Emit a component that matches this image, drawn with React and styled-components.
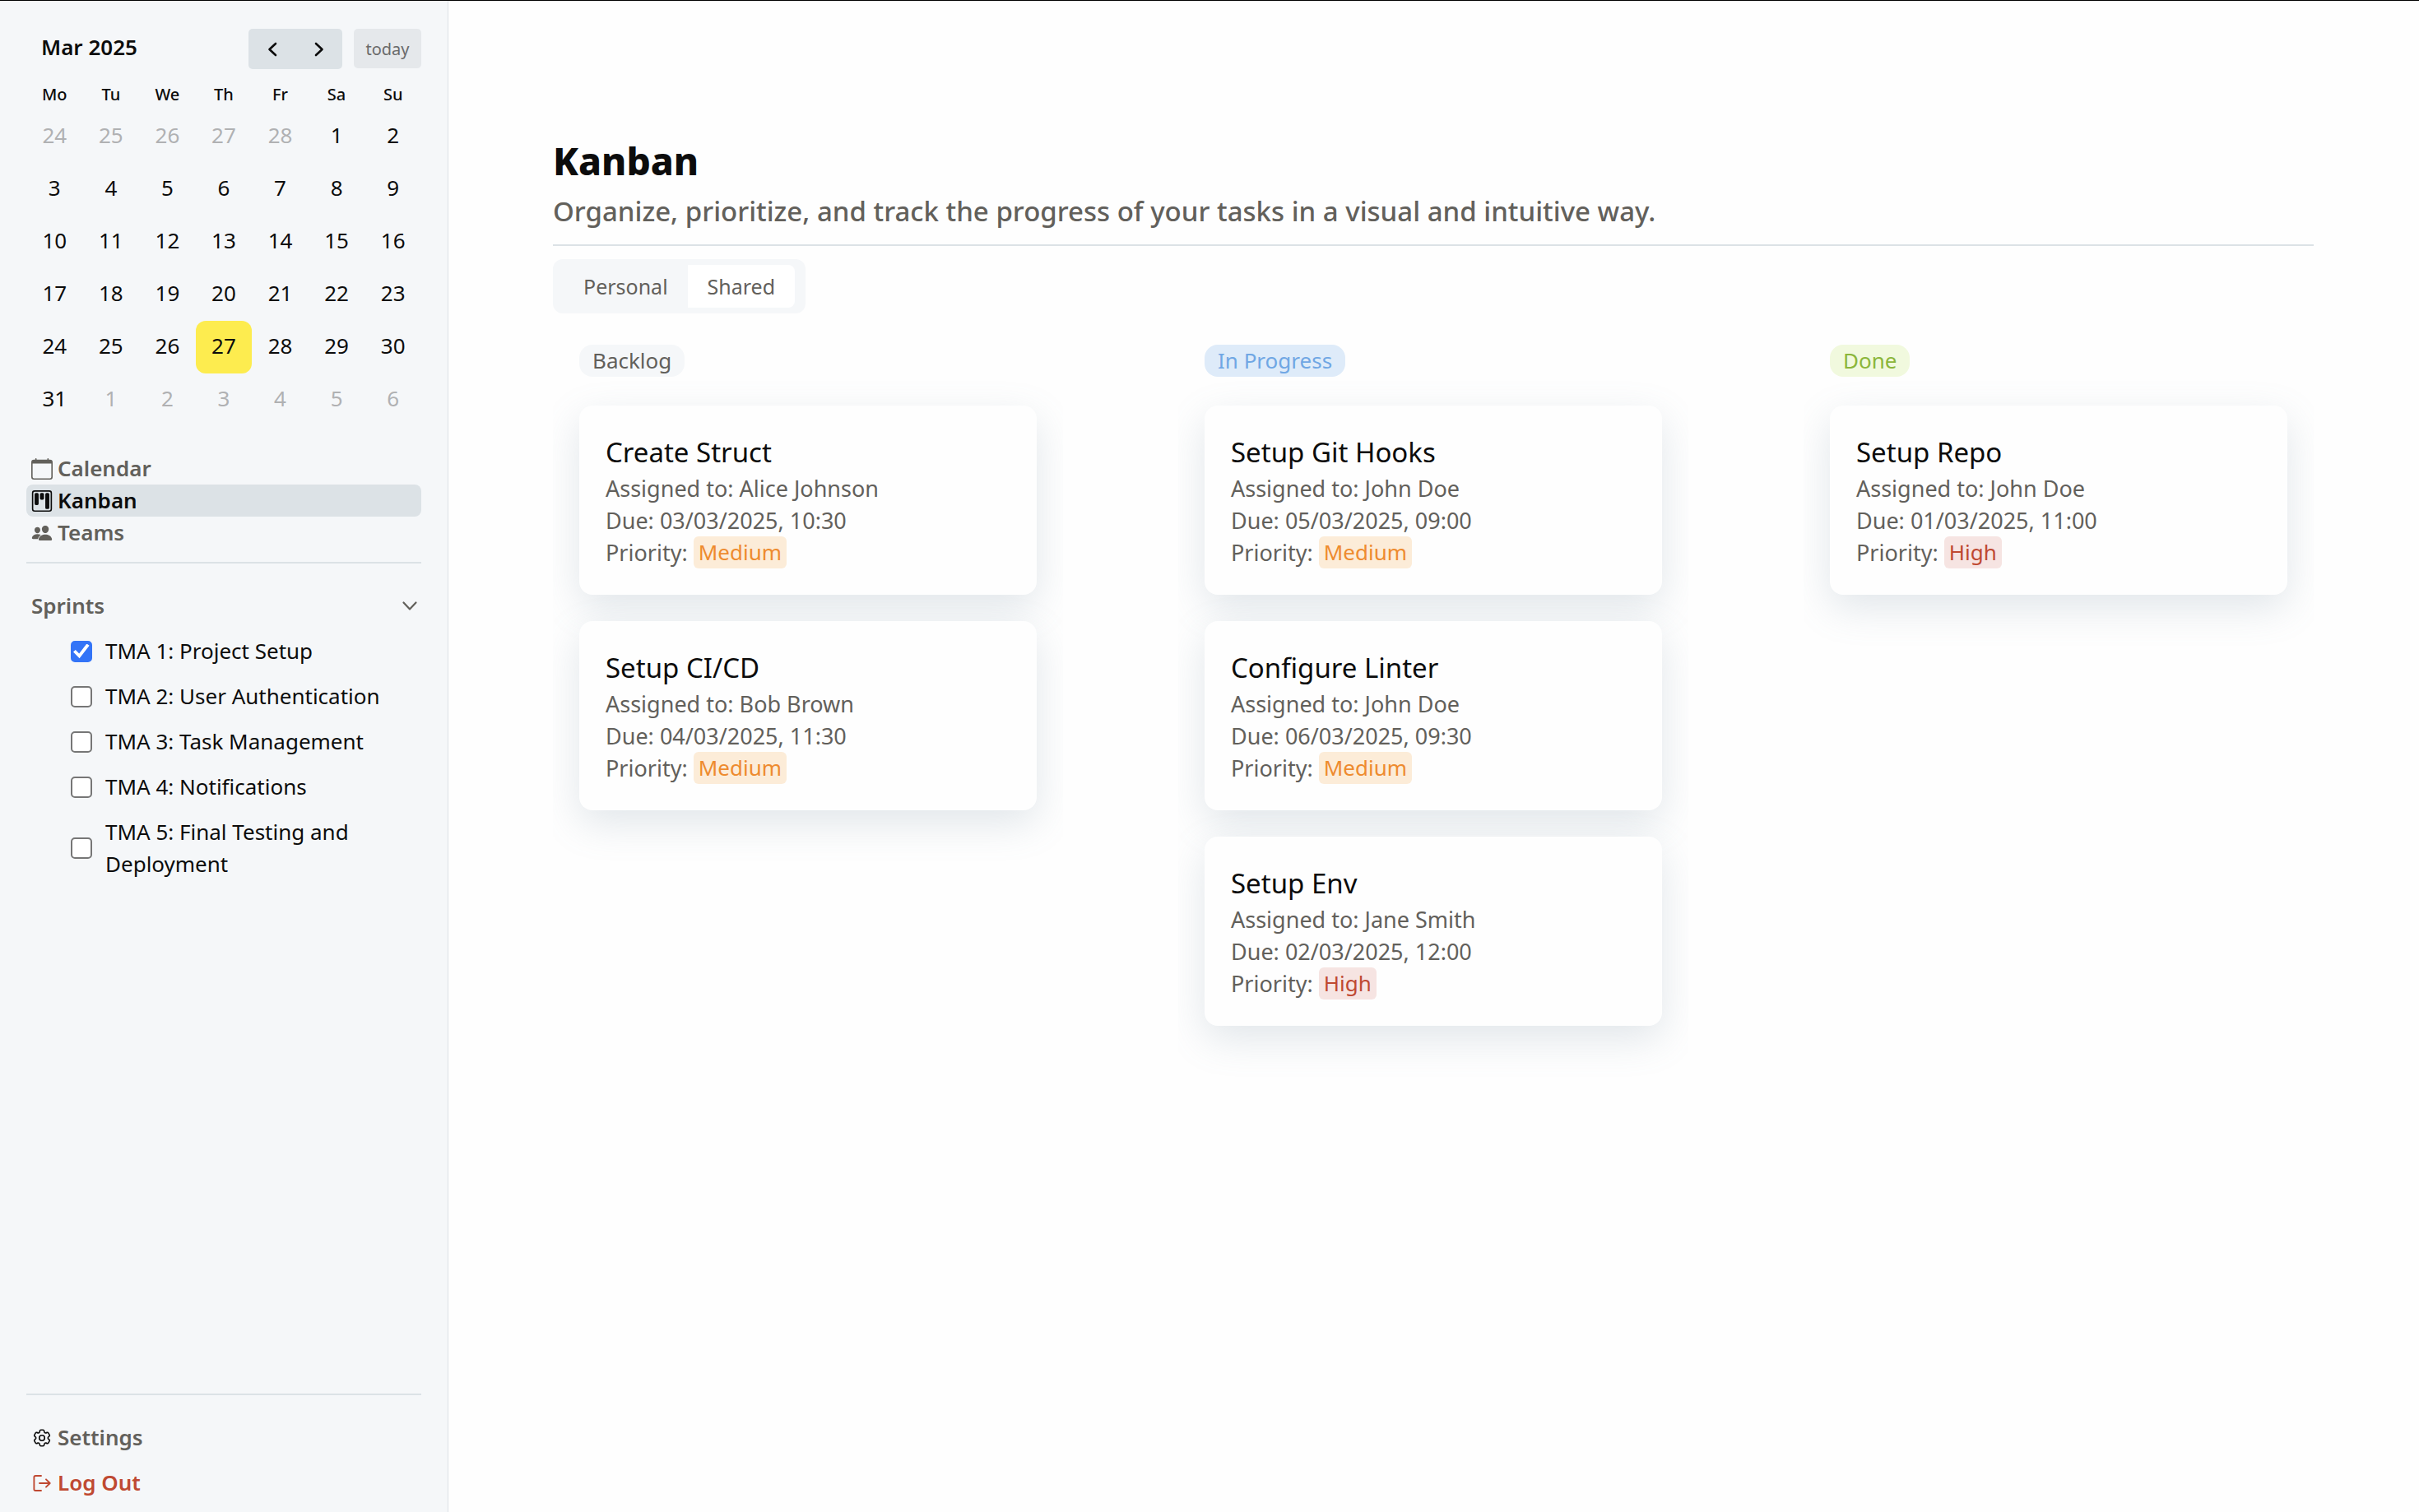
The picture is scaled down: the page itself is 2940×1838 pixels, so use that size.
import React, { useState } from "react";
import styled, { createGlobalStyle } from "styled-components";
import { BsCalendar, BsKanban } from "react-icons/bs";
import { IoPeople } from "react-icons/io5";
import { HiOutlineCog6Tooth } from "react-icons/hi2";

const color = {
  page: "#fefefe",
  panel: "#f5f7f9",
  line: "#dce2e6",
  ink: "#0c0c0c",
  soft: "#62605b",
  faint: "#b0b1b3",
  danger: "#bf4932",
};

const GlobalStyle = createGlobalStyle`
  *, *::before, *::after { box-sizing: border-box; }
  body {
    margin: 0;
    background: ${color.page};
    color: ${color.ink};
    font-family: "Noto Sans", "Open Sans", sans-serif;
    font-size: 26px;
    font-weight: 400;
    line-height: 39px;
  }
  h1, h2, h3, p, ul { margin: 0; padding: 0; }
  ul { list-style: none; }
  button { font: inherit; color: inherit; border: 0; padding: 0; background: none; cursor: pointer; }
  a { color: inherit; text-decoration: none; }
`;

const Shell = styled.div`
  display: grid;
  grid-template-columns: 544px minmax(0, 1fr);
  min-height: 100vh;
  border-top: 1px solid #000;
`;

const Sidebar = styled.aside`
  display: flex;
  flex-direction: column;
  padding: 34px 32px 16px;
  background: ${color.panel};
`;

const MonthBar = styled.div`
  display: flex;
  align-items: flex-start;
  gap: 14px;
  height: 50px;
  padding-left: 18px;
`;

const MonthTitle = styled.h2`
  flex: 1;
  font-size: 26px;
  font-weight: 600;
  line-height: 45px;
`;

const Pager = styled.div`
  display: flex;
  border-radius: 5px;
  background: ${color.line};
`;

const PagerButton = styled.button`
  display: grid;
  place-items: center;
  width: 57px;
  height: 49px;
`;

const TodayButton = styled.button`
  width: 82px;
  height: 48px;
  border-radius: 5px;
  background: #e5e8eb;
  color: #6a6a6a;
  font-size: 20px;
`;

const MonthTable = styled.table`
  width: 100%;
  margin-top: 10px;
  table-layout: fixed;
  border-collapse: separate;
  border-spacing: 0;
  text-align: center;
`;

const Weekday = styled.th`
  height: 39px;
  padding: 0;
  font-size: 20px;
  font-weight: 500;
`;

const Day = styled.td`
  height: 64px;
  padding: 0 0 3px;
  border-radius: 12px;
  color: ${(p) => (p.$outside ? color.faint : color.ink)};
  background: ${(p) => (p.$today ? "#fdec4f" : "transparent")};
`;

const Nav = styled.nav`
  display: flex;
  flex-direction: column;
  gap: ${(p) => p.$gap || 0}px;
  margin-top: 32px;
`;

const NavLink = styled.a`
  display: flex;
  align-items: center;
  gap: 6px;
  padding: 0 6px;
  border-radius: 8px;
  font-weight: 600;
  color: ${(p) => (p.$danger ? color.danger : p.$active ? color.ink : color.soft)};
  background: ${(p) => (p.$active ? color.line : "transparent")};
  svg {
    width: 26px;
    height: 26px;
    color: ${(p) => (p.$darkIcon ? color.ink : "inherit")};
  }
`;

const Divider = styled.hr`
  width: 100%;
  height: 2px;
  margin: 16px 0 0;
  border: 0;
  background: ${color.line};
`;

const SprintToggle = styled.button`
  display: flex;
  align-items: center;
  justify-content: space-between;
  margin-top: 32px;
  padding: 0 4px 0 6px;
  font-weight: 600;
  color: ${color.soft};
`;

const SprintList = styled.ul`
  display: flex;
  flex-direction: column;
  gap: 16px;
  margin-top: 16px;
  padding-left: 54px;
`;

const SprintLabel = styled.label`
  display: flex;
  align-items: center;
  gap: 16px;
`;

const Check = styled.input`
  flex: none;
  display: grid;
  place-items: center;
  width: 26px;
  height: 26px;
  margin: 0;
  appearance: none;
  border: 2px solid #767676;
  border-radius: 5px;
  background: #fff;
  &:checked {
    border-color: #3374f7;
    background: #3374f7;
  }
  &:checked::before {
    content: "";
    width: 20px;
    height: 18px;
    background: #fff;
    clip-path: polygon(0 56%, 14% 42%, 36% 66%, 82% 0, 98% 12%, 38% 98%);
  }
`;

const SidebarFooter = styled.footer`
  margin-top: auto;
`;

const Main = styled.main`
  padding: 160px 128px 64px 127px;
  border-left: 1px solid ${color.line};
`;

const PageTitle = styled.h1`
  font-size: 46px;
  font-weight: 800;
  line-height: 68px;
`;

const Subtitle = styled.p`
  margin-top: 4px;
  font-size: 33px;
  font-weight: 500;
  line-height: 48px;
  color: ${color.soft};
`;

const Tabs = styled.div`
  display: inline-flex;
  margin-top: 16px;
  padding: 7px 13px;
  border-radius: 12px;
  background: ${color.panel};
`;

const Tab = styled.button`
  height: 52px;
  padding: 0 24px;
  font-size: 25px;
  color: ${color.soft};
  background: ${(p) => (p.$active ? "#fff" : "transparent")};
  border-radius: ${(p) => (p.$last ? "0 8px 8px 0" : "8px 0 0 8px")};
`;

const Board = styled.div`
  display: grid;
  grid-template-columns: repeat(3, minmax(0, 1fr));
  gap: 140px;
`;

const Column = styled.section`
  padding: 38px 32px 80px;
  overflow: hidden;
`;

const tones = {
  neutral: ["#f5f7f9", color.soft],
  blue: ["#deebf9", "#70a7e4"],
  green: ["#f1f9de", "#8bb63a"],
  orange: ["#fcecd8", "#ee8b2f"],
  red: ["#f6e4e2", color.danger],
};

const ColumnTitle = styled.h2`
  width: fit-content;
  padding: 0 16px;
  border-radius: 16px;
  font-size: 26px;
  font-weight: 400;
  background: ${(p) => tones[p.$tone][0]};
  color: ${(p) => tones[p.$tone][1]};
`;

const CardList = styled.ul`
  display: flex;
  flex-direction: column;
  gap: 32px;
  margin-top: 35px;
`;

const Card = styled.li`
  padding: 32px;
  border-radius: 16px;
  background: ${color.page};
  color: ${color.soft};
  font-size: 27px;
  box-shadow: rgba(110, 135, 155, 0.2) 0 16px 48px;
`;

const CardTitle = styled.h3`
  font-size: 33px;
  font-weight: 400;
  line-height: 49px;
  color: ${color.ink};
`;

const Priority = styled.span`
  display: inline-block;
  padding: 0 6px;
  border-radius: 6px;
  font-size: 26px;
  vertical-align: top;
  background: ${(p) => tones[p.$tone][0]};
  color: ${(p) => tones[p.$tone][1]};
`;

const Arrow = ({ left }) => (
  <svg width="12" height="20" viewBox="0 0 12 20" fill="none" stroke="currentColor" strokeWidth="2.6" strokeLinecap="round" strokeLinejoin="round" aria-hidden="true">
    <path d={left ? "M10 3 2.500 10 10 17" : "M2 3 9.500 10 2 17"} />
  </svg>
);

const ChevronDown = () => (
  <svg width="20" height="14" viewBox="0 0 20 14" fill="none" stroke="currentColor" strokeWidth="2.200" strokeLinecap="round" strokeLinejoin="round" aria-hidden="true">
    <path d="M2.500 2.500 10 10.500 17.500 2.500" />
  </svg>
);

const LogOutIcon = () => (
  <svg viewBox="0 0 26 26" fill="none" stroke="currentColor" strokeWidth="1.900" strokeLinecap="round" strokeLinejoin="round" aria-hidden="true">
    <path d="M12 4H5.200Q3.400 4 3.400 5.800V20.200Q3.400 22 5.200 22H12M10 13H22.500M18 8.300 22.700 13 18 17.700" />
  </svg>
);

const weekdays = ["Mo", "Tu", "We", "Th", "Fr", "Sa", "Su"];
const weeks = Array.from({ length: 6 }, (_, w) =>
  Array.from({ length: 7 }, (_, d) => {
    const n = w * 7 + d - 4;
    if (n < 1) return { n: n + 28, outside: true };
    if (n > 31) return { n: n - 31, outside: true };
    return { n, today: n === 27 };
  })
);

const sprints = [
  "TMA 1: Project Setup",
  "TMA 2: User Authentication",
  "TMA 3: Task Management",
  "TMA 4: Notifications",
  "TMA 5: Final Testing and Deployment",
];

const columns = [
  {
    name: "Backlog",
    tone: "neutral",
    cards: [
      ["Create Struct", "Alice Johnson", "03/03/2025, 10:30", "Medium"],
      ["Setup CI/CD", "Bob Brown", "04/03/2025, 11:30", "Medium"],
    ],
  },
  {
    name: "In Progress",
    tone: "blue",
    cards: [
      ["Setup Git Hooks", "John Doe", "05/03/2025, 09:00", "Medium"],
      ["Configure Linter", "John Doe", "06/03/2025, 09:30", "Medium"],
      ["Setup Env", "Jane Smith", "02/03/2025, 12:00", "High"],
    ],
  },
  {
    name: "Done",
    tone: "green",
    cards: [["Setup Repo", "John Doe", "01/03/2025, 11:00", "High"]],
  },
];

function MiniCalendar() {
  return (
    <section aria-label="Calendar">
      <MonthBar>
        <MonthTitle>Mar 2025</MonthTitle>
        <Pager>
          <PagerButton type="button" aria-label="Previous month"><Arrow left /></PagerButton>
          <PagerButton type="button" aria-label="Next month"><Arrow /></PagerButton>
        </Pager>
        <TodayButton type="button">today</TodayButton>
      </MonthBar>
      <MonthTable>
        <thead>
          <tr>{weekdays.map((d) => <Weekday key={d} scope="col">{d}</Weekday>)}</tr>
        </thead>
        <tbody>
          {weeks.map((week, i) => (
            <tr key={i}>
              {week.map((day, j) => (
                <Day key={j} $outside={day.outside} $today={day.today}>{day.n}</Day>
              ))}
            </tr>
          ))}
        </tbody>
      </MonthTable>
    </section>
  );
}

function Sprints() {
  const [open, setOpen] = useState(true);
  const [done, setDone] = useState([0]);
  const toggle = (i) => setDone(done.includes(i) ? done.filter((x) => x !== i) : [...done, i]);
  return (
    <>
      <SprintToggle type="button" aria-expanded={open} onClick={() => setOpen(!open)}>
        Sprints
        <ChevronDown />
      </SprintToggle>
      {open && (
        <SprintList>
          {sprints.map((name, i) => (
            <li key={name}>
              <SprintLabel>
                <Check type="checkbox" checked={done.includes(i)} onChange={() => toggle(i)} />
                <span>{name}</span>
              </SprintLabel>
            </li>
          ))}
        </SprintList>
      )}
    </>
  );
}

export default function App() {
  const [tab, setTab] = useState("Shared");
  return (
    <>
      <GlobalStyle />
      <Shell>
        <Sidebar>
          <MiniCalendar />
          <Nav aria-label="Views">
            <NavLink href="#calendar"><BsCalendar />Calendar</NavLink>
            <NavLink href="#kanban" $active aria-current="page"><BsKanban />Kanban</NavLink>
            <NavLink href="#teams"><IoPeople />Teams</NavLink>
          </Nav>
          <Divider />
          <Sprints />
          <SidebarFooter>
            <Divider />
            <Nav $gap={16} aria-label="Account">
              <NavLink href="#settings" $darkIcon><HiOutlineCog6Tooth />Settings</NavLink>
              <NavLink href="#logout" $danger><LogOutIcon />Log Out</NavLink>
            </Nav>
          </SidebarFooter>
        </Sidebar>
        <Main>
          <PageTitle>Kanban</PageTitle>
          <Subtitle>Organize, prioritize, and track the progress of your tasks in a visual and intuitive way.</Subtitle>
          <Divider />
          <Tabs role="tablist">
            {["Personal", "Shared"].map((name, i) => (
              <Tab key={name} type="button" role="tab" aria-selected={tab === name} $active={tab === name} $last={i === 1} onClick={() => setTab(name)}>
                {name}
              </Tab>
            ))}
          </Tabs>
          <Board>
            {columns.map((col) => (
              <Column key={col.name}>
                <ColumnTitle $tone={col.tone}>{col.name}</ColumnTitle>
                <CardList>
                  {col.cards.map(([title, who, due, level]) => (
                    <Card key={title}>
                      <CardTitle>{title}</CardTitle>
                      <p>Assigned to: {who}</p>
                      <p>Due: {due}</p>
                      <p>
                        Priority: <Priority $tone={level === "High" ? "red" : "orange"}>{level}</Priority>
                      </p>
                    </Card>
                  ))}
                </CardList>
              </Column>
            ))}
          </Board>
        </Main>
      </Shell>
    </>
  );
}
